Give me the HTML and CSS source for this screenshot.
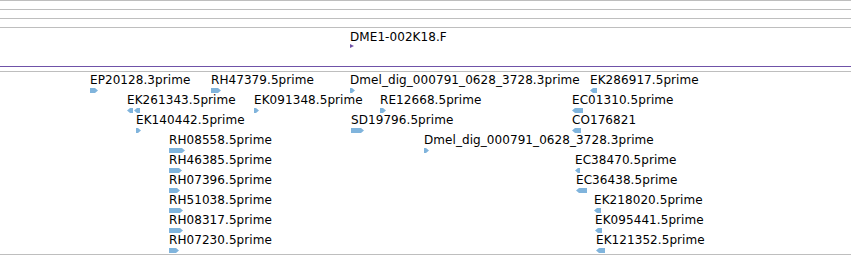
FILE: index.html
```html
<!DOCTYPE html>
<html lang="en">
<head>
    <meta charset="UTF-8">
    <title>Track view</title>
    <link rel="stylesheet" href="styles.css">
</head>
<body>
    <div class="ruler">
        <div class="tick"></div>
        <div class="tick"></div>
        <div class="tick"></div>
    </div>
    <div class="track clones">
        <div class="feature" style="left:350px">
            <span class="label">DME1-002K18.F</span>
            <svg class="glyph" width="5" height="5"><polygon points="0,0 4,2 0,4" fill="#6f52a8"/></svg>
        </div>
    </div>
    <div class="spacer"></div>
    <div class="track ests" id="ests"></div>

    <script>
        // rows of EST features: [name, start x, width, strand]
        var rows = [
            [["EP20128.3prime", 90, 8, 1], ["RH47379.5prime", 211, 10, 1], ["Dmel_dig_000791_0628_3728.3prime", 350, 5, 1], ["EK286917.5prime", 590, 7, -1]],
            [["EK261343.5prime", 127, 13, -2], ["EK091348.5prime", 254, 5, 1], ["RE12668.5prime", 380, 6, 1], ["EC01310.5prime", 572, 11, -1]],
            [["EK140442.5prime", 136, 5, 1], ["SD19796.5prime", 351, 13, 1], ["CO176821", 572, 9, -1]],
            [["RH08558.5prime", 169, 16, 1], ["Dmel_dig_000791_0628_3728.3prime", 424, 5, 1]],
            [["RH46385.5prime", 169, 13, 1], ["EC38470.5prime", 575, 5, -1]],
            [["RH07396.5prime", 169, 11, 1], ["EC36438.5prime", 576, 11, -1]],
            [["RH51038.5prime", 169, 14, 1], ["EK218020.5prime", 594, 7, -1]],
            [["RH08317.5prime", 169, 14, 1], ["EK095441.5prime", 595, 7, -1]],
            [["RH07230.5prime", 169, 10, 1], ["EK121352.5prime", 596, 9, -1]]
        ];

        function arrow(x, w, strand) {
            var tip = Math.min(3, w - 1);
            if (strand > 0) {
                return (x) + ",0 " + (x + w - tip) + ",0 " + (x + w) + ",2.5 " + (x + w - tip) + ",5 " + x + ",5";
            }
            return x + ",2.5 " + (x + tip) + ",0 " + (x + w) + ",0 " + (x + w) + ",5 " + (x + tip) + ",5";
        }

        var track = document.getElementById('ests');
        rows.forEach(function (row) {
            var r = document.createElement('div');
            r.className = 'row';
            row.forEach(function (f) {
                var pts;
                if (f[3] === -2) {
                    var half = Math.floor(f[2] / 2);
                    pts = '<polygon points="' + arrow(0, half, -1) + '"/><polygon points="' + arrow(half + 1, f[2] - half - 1, -1) + '"/>';
                } else {
                    pts = '<polygon points="' + arrow(0, f[2], f[3]) + '"/>';
                }
                var d = document.createElement('div');
                d.className = 'feature';
                d.style.left = f[1] + 'px';
                d.innerHTML = '<span class="label">' + f[0] + '</span>' +
                    '<svg class="glyph" width="' + (f[2] + 1) + '" height="5" fill="#80b4dc">' + pts + '</svg>';
                r.appendChild(d);
            });
            track.appendChild(r);
        });
    </script>
</body>
</html>
```

FILE: styles.css
```css
body {
    margin: 0;
    font-family: "DejaVu Sans", sans-serif;
    font-size: 12px;
    color: #000;
    background: #fff;
}
.ruler {
    border-top: 1px solid #bebebe;
}
.tick {
    height: 8px;
    border-bottom: 1px solid #bebebe;
}
.track {
    position: relative;
}
.clones {
    height: 38px;
    border-bottom: 1px solid #6f52a8;
}
.clones .feature {
    top: 2px;
}
.spacer {
    height: 4px;
    border-bottom: 1px solid #bebebe;
}
.ests {
    padding-top: 1px;
    padding-bottom: 1px;
    border-bottom: 1px solid #bebebe;
}
.row {
    position: relative;
    height: 20px;
}
.feature {
    position: absolute;
    top: 0;
}
.label {
    display: block;
    line-height: 14px;
    letter-spacing: 0.07px;
    white-space: nowrap;
}
.glyph {
    display: block;
    margin-top: 1px;
}
.clones .glyph {
    margin-top: 0;
}
```
